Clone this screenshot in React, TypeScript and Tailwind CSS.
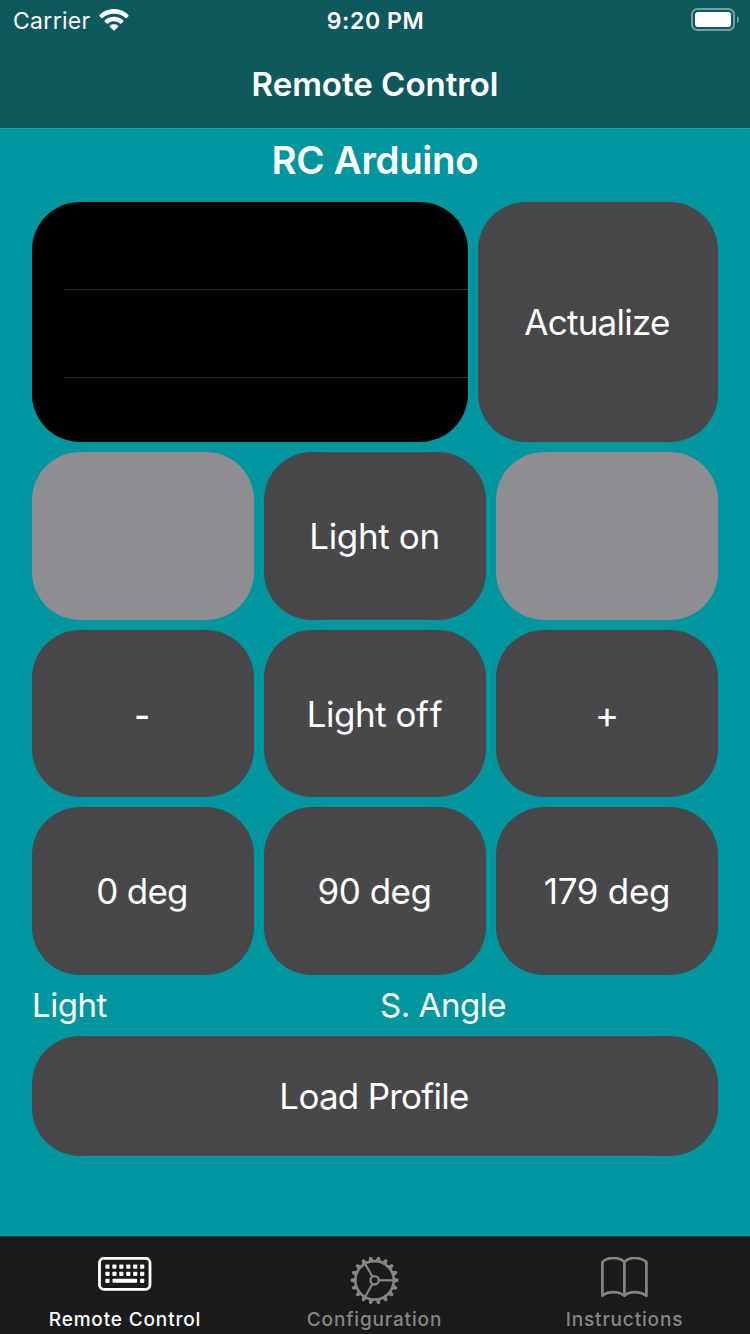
import type { ReactNode } from 'react';

function WifiIcon() {
  return (
    <svg width="30" height="22" viewBox="0 0 30 22" fill="white">
      <path d="M15 0C20.8 0 25.8 2.2 29.3 5.9Q30 6.7 29.3 7.4L27.6 9.1Q27 9.6 26.3 9C23.200 6.200 19.300 4.800 15 4.800S6.800 6.200 3.700 9Q3 9.600 2.400 9.100L.7 7.400Q0 6.700.7 5.900C4.200 2.200 9.200 0 15 0Z" />
      <path d="M15 7.700C18.700 7.700 21.800 9.100 24.200 11.300Q24.900 12 24.200 12.700L22.300 14.500Q21.700 15 21 14.500C19.300 13.100 17.300 12.300 15 12.300S10.700 13.100 9 14.500Q8.300 15 7.700 14.500L5.800 12.700Q5.100 12 5.800 11.300C8.200 9.100 11.300 7.700 15 7.700Z" />
      <path d="M15 15.200C16.600 15.200 17.900 15.700 19 16.600Q19.700 17.300 19 18L15.700 21.300Q15 22 14.300 21.300L11 18Q10.300 17.300 11 16.600C12.100 15.700 13.400 15.200 15 15.200Z" />
    </svg>
  );
}

function BatteryIcon() {
  return (
    <svg width="50" height="24" viewBox="0 0 50 24">
      <rect x="2" y="1" width="42" height="21" rx="5.500" fill="none" stroke="#75a0a3" strokeWidth="2" />
      <rect x="5" y="4" width="36" height="15" rx="3" fill="white" />
      <path d="M47 8Q49 9 49 11.500T47 15Z" fill="#75a0a3" />
    </svg>
  );
}

const keyColumns = [0, 1, 2, 3, 4, 5];

function KeyboardIcon() {
  return (
    <svg width="54" height="34" viewBox="0 0.2 54 34" fill="white">
      <rect x="1.500" y="1.500" width="50.500" height="31" rx="4.500" fill="none" stroke="white" strokeWidth="2.800" />
      {keyColumns.map((c) => (
        <g key={c}>
          <rect x={7.4 + c * 6.93} y="7.800" width="4.200" height="4.200" rx=".8" />
          <rect x={7.4 + c * 6.93} y="14.900" width="4.200" height="4.200" rx=".8" />
        </g>
      ))}
      <rect x="7.400" y="21.900" width="4.200" height="4.200" rx=".8" />
      <rect x="14.500" y="22" width="24.700" height="4" rx=".8" />
      <rect x="42.050" y="21.900" width="4.200" height="4.200" rx=".8" />
    </svg>
  );
}

const teeth = Array.from({ length: 18 }, (_, i) => i * 20);

function GearIcon() {
  return (
    <svg width="50" height="50" viewBox="-24.6 -23.3 50 50">
      <circle r="19.200" fill="none" stroke="#858585" strokeWidth="2.600" />
      {teeth.map((a) => (
        <path key={a} d="M19.500 -2.700L23.900 -1.200V1.200L19.500 2.700Z" fill="#858585" transform={`rotate(${a})`} />
      ))}
      <circle r="4.200" fill="none" stroke="#858585" strokeWidth="2.400" />
      {[0, 120, 240].map((a) => (
        <path key={a} d="M5 0H19" stroke="#858585" strokeWidth="2.200" transform={`rotate(${a})`} />
      ))}
    </svg>
  );
}

function BookIcon() {
  return (
    <svg width="48" height="42" viewBox="0.9 1.6 48 42" fill="none" stroke="#858585" strokeWidth="2.700" strokeLinejoin="round" strokeLinecap="round">
      <path d="M24.300 6.500C18.500 1.200 8 1.200 2.300 6.500V40.300C8 35.500 18.500 35.500 24.300 40.300C29.500 35.500 39.500 35.500 46.300 40.300V6.500C39.500 1.200 29.500 1.200 24.300 6.500ZM24.300 6.500V40.300" />
    </svg>
  );
}

function PadButton({ children, className = '' }: { children?: ReactNode; className?: string }) {
  return (
    <button
      className={`flex items-center justify-center whitespace-nowrap rounded-[48px] bg-[#484749] text-[35px] font-[380] ${className}`}
    >
      {children}
    </button>
  );
}

function Tab({ icon, label, className = '' }: { icon: ReactNode; label: string; className?: string }) {
  return (
    <div className={`flex flex-col items-center justify-between ${className}`}>
      <div className="flex h-12 items-start justify-center">{icon}</div>
      <span className="whitespace-nowrap text-[19px] leading-6 font-medium tracking-[0.85px]">{label}</span>
    </div>
  );
}

export default function App() {
  return (
    <div className="flex h-[1334px] w-[750px] flex-col overflow-hidden bg-[#0096a0] font-[Inter,sans-serif] text-white">
      <header className="flex h-32 flex-col bg-[#0f595e]">
        <div className="grid h-10 grid-cols-3 items-center text-[23px]">
          <div className="flex items-center gap-2 pl-[13px]">
            <span className="pt-[2px] font-[380] tracking-[0.3px]">Carrier</span>
            <WifiIcon />
          </div>
          <div className="pt-[2px] pl-px text-center font-[570] tracking-[0.6px]">9:20 PM</div>
          <div className="flex justify-end pr-[10px]">
            <BatteryIcon />
          </div>
        </div>
        <h1 className="flex h-[88px] items-center justify-center pt-[2px] text-[33px] font-semibold">Remote Control</h1>
      </header>

      <main className="flex h-[1108px] flex-col border-t border-[#1fa2aa] px-8">
        <h2 className="flex h-[63px] items-center justify-center text-[38.5px] font-semibold tracking-[-0.35px]">RC Arduino</h2>

        <div className="mt-[10px] flex h-60 gap-[10px]">
          <div className="flex w-[436px] flex-col overflow-hidden rounded-[48px] bg-black pl-8">
            <div className="h-[88px] border-b border-[#303032]" />
            <div className="h-[88px] border-b border-[#303032]" />
          </div>
          <PadButton className="w-60 pr-[2px] tracking-[-0.75px]">Actualize</PadButton>
        </div>

        <div className="mt-[10px] grid h-[523px] grid-cols-3 grid-rows-[168px_167px_168px] gap-[10px]">
          <PadButton className="bg-[#8e8d92]!" />
          <PadButton className="pr-px tracking-[-0.35px]">Light on</PadButton>
          <PadButton className="bg-[#8e8d92]!" />
          <PadButton className="pt-[3px] pr-[2px] font-medium!">-</PadButton>
          <PadButton className="pt-[2px] pr-px tracking-[-0.5px]">
            <span>Light o<span className="tracking-[0.8px]">f</span>f</span>
          </PadButton>
          <PadButton className="pt-[2px] text-[37px]!">+</PadButton>
          <PadButton className="pr-[2px] tracking-[-0.7px]">0 deg</PadButton>
          <PadButton className="pr-px tracking-[-0.5px]">90 deg</PadButton>
          <PadButton className="tracking-[-0.3px]">179 deg</PadButton>
        </div>

        <div className="grid h-[61px] grid-cols-2 items-center gap-[10px] text-[33px] font-[380] tracking-[-0.45px]">
          <span>Light</span>
          <span>S. Angle</span>
        </div>
        <PadButton className="h-[120px] pr-[2px] tracking-[-0.75px]">Load Profile</PadButton>
      </main>

      <nav className="grid h-[98px] grid-cols-[250px_249px_251px] border-t border-[#303032] bg-[#1b1b1b] pt-5 pb-[2px]">
        <Tab icon={<KeyboardIcon />} label="Remote Control" />
        <Tab icon={<GearIcon />} label="Configuration" className="text-[#858585]" />
        <Tab icon={<BookIcon />} label="Instructions" className="text-[#858585]" />
      </nav>
    </div>
  );
}
